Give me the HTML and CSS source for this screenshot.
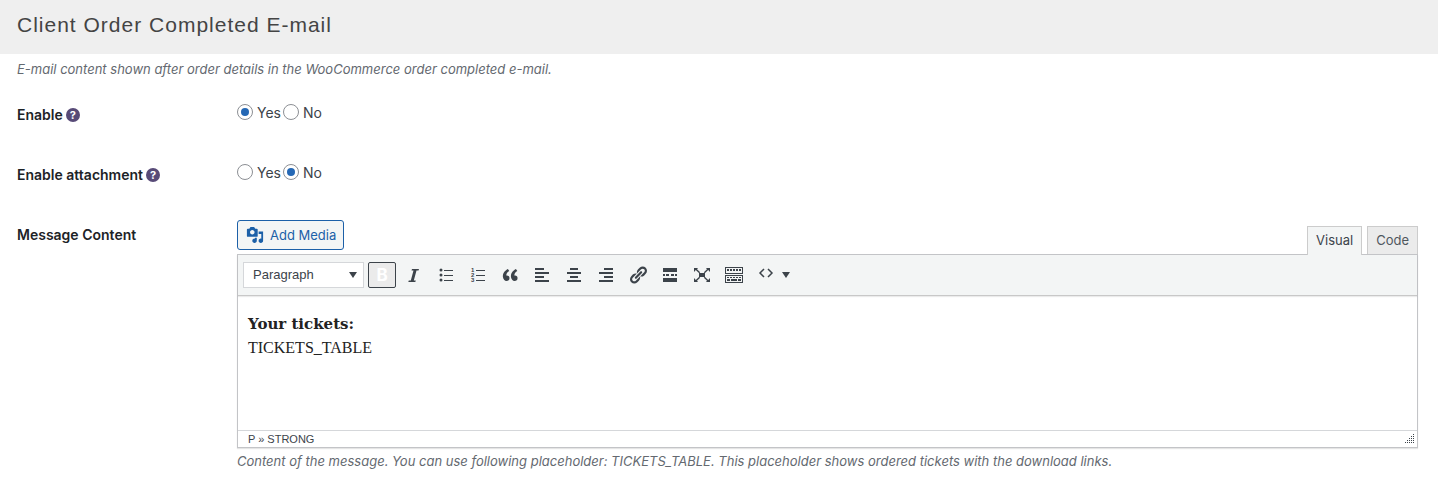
FILE: index.html
```html
<!DOCTYPE html>
<html lang="en">
<head>
  <meta charset="UTF-8">
  <meta name="viewport" content="width=device-width, initial-scale=1.0">
  <title>Client Order Completed E-mail</title>
  <link rel="stylesheet" href="styles.css">
</head>
<body>
  <h3 class="section-title">Client Order Completed E-mail</h3>

  <form class="settings">
    <p class="description">E-mail content shown after order details in the WooCommerce order completed e-mail.</p>

    <div class="row" role="radiogroup" aria-labelledby="enable-label">
      <div class="row-label"><span id="enable-label">Enable</span><span class="help">?</span></div>
      <div class="row-field radios">
        <label><input type="radio" name="enable" value="yes" checked>Yes</label>
        <label><input type="radio" name="enable" value="no">No</label>
      </div>
    </div>

    <div class="row" role="radiogroup" aria-labelledby="attachment-label">
      <div class="row-label"><span id="attachment-label">Enable attachment</span><span class="help">?</span></div>
      <div class="row-field radios">
        <label><input type="radio" name="attachment" value="yes">Yes</label>
        <label><input type="radio" name="attachment" value="no" checked>No</label>
      </div>
    </div>

    <div class="row">
      <div class="row-label" id="message-label">Message Content</div>
      <div class="row-field">
        <div class="editor-tools">
          <button type="button" class="add-media">
            <svg viewBox="0 0 20 20"><path d="M13 11V4c0-.55-.45-1-1-1h-1.67L9 1H5L3.67 3H2c-.55 0-1 .45-1 1v7c0 .55.45 1 1 1h10c.55 0 1-.45 1-1zM7 4.500c1.380 0 2.500 1.120 2.500 2.500S8.380 9.500 7 9.500 4.500 8.380 4.500 7 5.620 4.500 7 4.500zM14 6h5v10.500c0 1.380-1.120 2.500-2.500 2.500S14 17.880 14 16.500s1.120-2.500 2.500-2.500c.17 0 .34.02.5.05V9h-3V6zm-4 8.050V13h2v3.500c0 1.380-1.120 2.500-2.500 2.500S7 17.880 7 16.500 8.120 14 9.500 14c.17 0 .34.02.5.05z"/></svg>
            Add Media
          </button>
          <div class="tabs">
            <button type="button" class="tab active">Visual</button>
            <button type="button" class="tab">Code</button>
          </div>
        </div>

        <div class="editor">
          <div class="toolbar">
            <div class="format">
              <select aria-label="Format">
                <option>Paragraph</option>
                <option>Heading 1</option>
                <option>Heading 2</option>
                <option>Preformatted</option>
              </select>
              <svg class="caret" viewBox="0 0 8 6"><path d="M0 0h8L4 6z"/></svg>
            </div>
            <button type="button" class="tool pressed" aria-label="Bold">B</button>
            <button type="button" class="tool" aria-label="Italic">
              <svg viewBox="0 0 20 20"><path d="M8 4h7l-.5 1.500h-2l-2.700 10h2l-.5 1.500h-7l.5-1.500h2l2.700-10h-2z"/></svg>
            </button>
            <button type="button" class="tool" aria-label="Bulleted list">
              <svg viewBox="0 0 20 20"><circle cx="5" cy="5" r="1.500"/><circle cx="5" cy="10" r="1.500"/><circle cx="5" cy="15" r="1.500"/><path d="M8 5h9v1H8zM8 10h9v1H8zM8 15h9v1H8z"/></svg>
            </button>
            <button type="button" class="tool" aria-label="Numbered list">
              <svg viewBox="0 0 20 20"><text x="3" y="7">1</text><text x="3" y="12">2</text><text x="3" y="17">3</text><path d="M8 5h9v1H8zM8 10h9v1H8zM8 15h9v1H8z"/></svg>
            </button>
            <button type="button" class="tool" aria-label="Blockquote">
              <svg viewBox="0 0 20 20"><path d="M9.490 13.220c0-.74-.2-1.380-.61-1.900-.62-.78-1.830-.88-2.530-.72-.29-1.650 1.110-3.750 2.920-4.650L7.880 4c-2.730 1.300-5.420 4.280-4.960 8.050C3.210 14.430 4.590 16 6.540 16c.85 0 1.560-.25 2.120-.75s.83-1.180.83-2.030zm8.050 0c0-.74-.2-1.380-.61-1.900-.63-.78-1.830-.88-2.530-.72-.29-1.650 1.110-3.750 2.920-4.650L15.930 4c-2.730 1.300-5.410 4.280-4.950 8.050.29 2.380 1.660 3.950 3.610 3.950.85 0 1.560-.25 2.120-.75s.83-1.180.83-2.030z"/></svg>
            </button>
            <button type="button" class="tool" aria-label="Align left">
              <svg viewBox="0 0 20 20"><path d="M3 3h9v2H3zM3 7h14v2H3zM3 11h9v2H3zM3 15h14v2H3z"/></svg>
            </button>
            <button type="button" class="tool" aria-label="Align center">
              <svg viewBox="0 0 20 20"><path d="M6 3h8v2H6zM3 7h14v2H3zM6 11h8v2H6zM3 15h14v2H3z"/></svg>
            </button>
            <button type="button" class="tool" aria-label="Align right">
              <svg viewBox="0 0 20 20"><path d="M8 3h9v2H8zM3 7h14v2H3zM8 11h9v2H8zM3 15h14v2H3z"/></svg>
            </button>
            <button type="button" class="tool" aria-label="Insert link">
              <svg viewBox="0 0 20 20"><path d="M17.740 2.760c1.680 1.690 1.680 4.410 0 6.100l-1.530 1.520c-1.120 1.120-2.700 1.470-4.140 1.090l2.620-2.610.76-.77.76-.76c.84-.84.84-2.200 0-3.040-.84-.85-2.200-.85-3.040 0l-.77.76-3.380 3.380c-.37-1.440-.02-3.020 1.100-4.140l1.520-1.530c1.690-1.680 4.420-1.680 6.100 0zM8.590 13.430l5.340-5.340c.42-.42.42-1.100 0-1.520-.44-.43-1.130-.39-1.530 0l-5.330 5.340c-.42.42-.42 1.100 0 1.520.44.43 1.130.39 1.520 0zm-.76 2.290l4.140-4.150c.38 1.440.03 3.020-1.090 4.140l-1.520 1.530c-1.690 1.680-4.410 1.680-6.100 0-1.680-1.680-1.680-4.420 0-6.100l1.530-1.520c1.120-1.120 2.700-1.470 4.140-1.100l-4.140 4.150c-.85.84-.85 2.200 0 3.050.84.84 2.200.84 3.040 0z"/></svg>
            </button>
            <button type="button" class="tool" aria-label="Read more">
              <svg viewBox="0 0 20 20"><path d="M3 3h14v4H3zM3 13h14v4H3zM3 9h2v2H3zM6 9h3v2H6zM11 9h3v2h-3zM15 9h2v2h-2z"/></svg>
            </button>
            <button type="button" class="tool" aria-label="Fullscreen">
              <svg viewBox="0 0 20 20"><path d="M7 8h6v4H7zM2 3h4L5 4.200l3.200 3-1 1L3.800 5 2 7zM18 3v4l-1.800-2-3.400 3.200-1-1L15 4.200 14 3zM2 17v-4l1.800 2 3.400-3.200 1 1L5 15.800 6 17zM18 17h-4l1-1.200-3.200-3 1-1 3.400 3.200 1.800-2z"/></svg>
            </button>
            <button type="button" class="tool" aria-label="Toolbar toggle">
              <svg viewBox="0 0 20 20"><path fill-rule="evenodd" d="M1 2h18v7H1zM2 3v5h16V3zM1 10h18v8H1zM2 11v6h16v-6z"/><path d="M3 4h2v2H3zM6 4h2v2H6zM9 4h2v2H9zM12 4h2v2h-2zM15 4h2v2h-2zM3 12h2v1H3zM6 12h2v1H6zM9 12h2v1H9zM12 12h2v1h-2zM15 12h2v1h-2zM3 14h3v2H3zM7 14h6v2H7zM14 14h3v2h-3z"/></svg>
            </button>
            <button type="button" class="tool menu" aria-label="Shortcodes">
              <svg class="code" viewBox="0 0 16 10"><path d="M6 1L2 5l4 4M10 1l4 4-4 4"/></svg>
              <svg class="caret" viewBox="0 0 8 6"><path d="M0 0h8L4 6z"/></svg>
            </button>
          </div>

          <div class="content" contenteditable="true" role="textbox" aria-labelledby="message-label" spellcheck="false">
            <p><strong>Your tickets:</strong><br>TICKETS_TABLE</p>
          </div>

          <div class="statusbar">
            <span>P » STRONG</span>
            <svg viewBox="0 0 10 10"><path d="M8 0h1v1H8zM6 2h1v1H6zM8 2h1v1H8zM4 4h1v1H4zM6 4h1v1H6zM8 4h1v1H8zM2 6h1v1H2zM4 6h1v1H4zM6 6h1v1H6zM8 6h1v1H8zM0 8h1v1H0zM2 8h1v1H2zM4 8h1v1H4zM6 8h1v1H6zM8 8h1v1H8z"/></svg>
          </div>
        </div>

        <p class="description">Content of the message. You can use following placeholder: TICKETS_TABLE. This placeholder shows ordered tickets with the download links.</p>
      </div>
    </div>
  </form>
</body>
</html>
```
FILE: styles.css
```css
* { box-sizing: border-box; margin: 0; padding: 0; }
body {
  font-family: Inter, sans-serif;
  font-size: 14px;
  line-height: 20px;
  color: #3c434a;
  background: #fff;
}
button, input, select {
  font: inherit;
  color: inherit;
}
button { cursor: pointer; }
svg { fill: currentColor; flex: none; }

.section-title {
  padding: 12px 17px 16px;
  background: #efefef;
  color: #444;
  font-family: "Liberation Sans", Arial, sans-serif;
  font-size: 21px;
  font-weight: 400;
  line-height: 26px;
  letter-spacing: 1px;
}
.settings { padding: 5px 20px 20px 17px; }
.description {
  font-size: 13px;
  font-style: italic;
  color: #646970;
}

/* setting rows */
.row {
  display: grid;
  grid-template-columns: 220px 1fr;
  min-height: 60px;
}
.description + .row { margin-top: 21px; }
.row-label {
  display: flex;
  align-items: center;
  gap: 3px;
  height: 30px;
  color: #1d2327;
  font-weight: 600;
}
.help {
  width: 14px;
  height: 14px;
  border-radius: 50%;
  background: #574a77;
  color: #fff;
  font-size: 11px;
  font-weight: 700;
  line-height: 14px;
  text-align: center;
}
.radios {
  display: flex;
  align-items: flex-start;
  gap: 2px;
  padding-top: 3px;
}
.radios label {
  display: flex;
  align-items: center;
  gap: 4px;
}
.radios input {
  display: grid;
  place-items: center;
  appearance: none;
  width: 16px;
  height: 16px;
  margin-bottom: 2px;
  border: 1px solid #8c8f94;
  border-radius: 50%;
  background: #fff;
}
.radios input:checked::before {
  content: "";
  width: 8px;
  height: 8px;
  border-radius: 50%;
  background: #2568b5;
}

/* editor */
.editor-tools {
  display: flex;
  justify-content: space-between;
  align-items: flex-end;
}
.add-media {
  display: flex;
  align-items: center;
  gap: 6px;
  height: 30px;
  margin-bottom: 4px;
  padding: 0 7px 0 8px;
  border: 1px solid #1c60a8;
  border-radius: 3px;
  background: #f3f5f5;
  color: #1c60a8;
  font-size: 13px;
}
.add-media svg {
  width: 18px;
  height: 18px;
}
.tabs {
  display: flex;
  gap: 5px;
}
.tab {
  height: 28px;
  padding: 0 8px 2px;
  border: 1px solid #ccc;
  border-bottom: 0;
  background: #ebebeb;
  color: #50575e;
  font-size: 13px;
}
.tab.active {
  height: 29px;
  margin-bottom: -1px;
  padding-bottom: 3px;
  z-index: 1;
  background: #f3f5f5;
  color: #3c434a;
}
.editor {
  border: 1px solid #c3c4c7;
  box-shadow: 0 1px 1px rgba(0,0,0,0.1);
}
.toolbar {
  display: flex;
  align-items: center;
  gap: 4px;
  height: 41px;
  padding: 0 5px;
  border-bottom: 1px solid #c8c8c8;
  background: #f3f5f5;
  box-shadow: 0 1px 1px rgba(0,0,0,0.08);
  color: #3c434a;
}
.format {
  display: grid;
  align-items: center;
  width: 121px;
}
.format > * { grid-area: 1 / 1; }
.format select {
  appearance: none;
  height: 26px;
  padding: 0 9px;
  border: 1px solid #d5d7da;
  background: #fff;
  font-family: "Liberation Sans", Arial, sans-serif;
  font-size: 13px;
}
.caret {
  width: 8px;
  height: 6px;
}
.format .caret {
  justify-self: end;
  margin-right: 7px;
  pointer-events: none;
}
.tool {
  display: flex;
  align-items: center;
  justify-content: center;
  width: 28px;
  height: 26px;
  border: 1px solid transparent;
  border-radius: 2px;
  background: none;
}
.tool svg {
  width: 20px;
  height: 20px;
}
.tool text {
  font: 700 6px "Liberation Sans", Arial, sans-serif;
}
.tool.pressed {
  border-color: #3c434a;
  background: #ebebeb;
  color: #fff;
  font-size: 17px;
  font-weight: 700;
}
.tool.menu {
  gap: 8px;
  width: 44px;
}
.tool .code {
  width: 16px;
  height: 10px;
  margin-bottom: 4px;
  fill: none;
  stroke: currentColor;
  stroke-width: 1.5;
}
.tool .caret {
  width: 8px;
  height: 6px;
}
.content {
  min-height: 134px;
  padding: 16px 10px;
  color: #222;
  font-family: Georgia, "Liberation Serif", serif;
  font-size: 16px;
  line-height: 24px;
  outline: none;
}
.content strong {
  font-family: Georgia, "DejaVu Serif", serif;
  font-size: 15px;
}
.statusbar {
  display: flex;
  justify-content: space-between;
  align-items: center;
  height: 17px;
  padding: 0 2px 0 10px;
  border-top: 1px solid #d5d7da;
  font-family: "Liberation Sans", Arial, sans-serif;
  font-size: 11px;
  line-height: 16px;
}
.statusbar svg {
  width: 10px;
  height: 10px;
}
.editor + .description { margin-top: 3px; }
```
